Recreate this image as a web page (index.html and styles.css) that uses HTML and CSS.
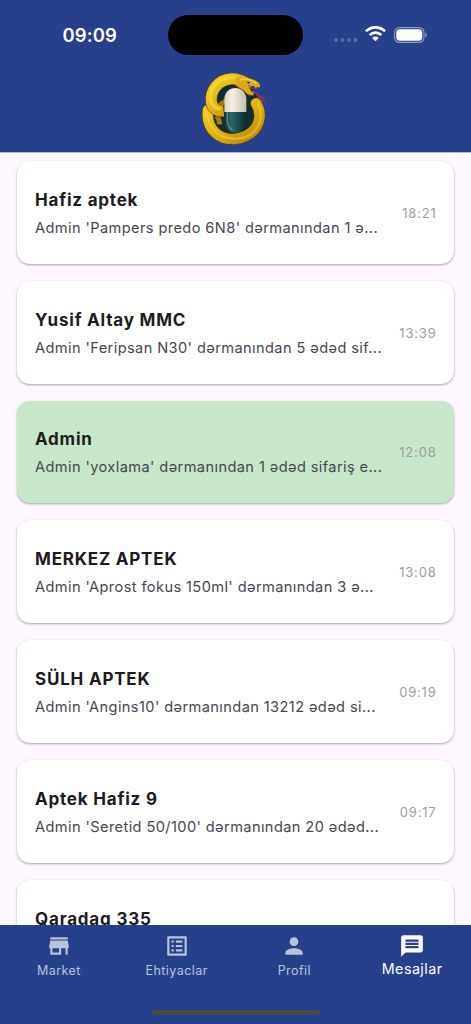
FILE: index.html
```html
<!DOCTYPE html>
<html lang="az">
<head>
  <meta charset="UTF-8" />
  <meta name="viewport" content="width=device-width, initial-scale=1.0" />
  <title>Mesajlar</title>
  <link rel="stylesheet" href="styles.css">
</head>
<body>
  <div class="app">
    <header class="header">
      <div class="status">
        <span class="clock">09:09</span>
        <span class="island"></span>
        <div class="signals">
          <svg class="dots" width="24" height="4" viewBox="0 0 24 4"><circle cx="2" cy="2" r="2"/><circle cx="8.5" cy="2" r="2"/><circle cx="15" cy="2" r="2"/><circle cx="21.5" cy="2" r="2"/></svg>
          <svg class="wifi" width="21" height="16" viewBox="0 0 21 16">
            <path d="M1 5.4a13.2 13.2 0 0 1 19 0M4.7 9.1a8.2 8.2 0 0 1 11.6 0" fill="none" stroke="#fff" stroke-width="2.7"/>
            <path d="M7.2 11.9a4.7 4.7 0 0 1 6.6 0L10.5 15.3z" fill="#fff"/>
          </svg>
          <svg class="battery" width="34" height="16" viewBox="0 0 34 16">
            <rect x=".6" y=".6" width="29.4" height="14.8" rx="4.8" fill="none" stroke="#8f9cc7" stroke-width="1.1"/>
            <rect x="2.3" y="2.3" width="26" height="11.4" rx="3.4" fill="#fff"/>
            <path d="M31.3 5.6c2 .6 2 4.2 0 4.8z" fill="#8f9cc7"/>
          </svg>
        </div>
      </div>
      <svg class="logo" width="90" height="95" viewBox="0 0 270 285">
        <defs>
          <linearGradient id="gold" x1="0" y1="0" x2="1" y2="1">
            <stop offset="0" stop-color="#f4cf25"/>
            <stop offset=".55" stop-color="#dcae0d"/>
            <stop offset="1" stop-color="#b98505"/>
          </linearGradient>
          <linearGradient id="cream" x1="0" x2="1">
            <stop offset="0" stop-color="#d5cfbd"/>
            <stop offset=".35" stop-color="#f5f1e6"/>
            <stop offset="1" stop-color="#c4bdaa"/>
          </linearGradient>
          <linearGradient id="teal" x1="0" x2="1">
            <stop offset="0" stop-color="#0b3a3d"/>
            <stop offset=".3" stop-color="#2a6969"/>
            <stop offset="1" stop-color="#052d31"/>
          </linearGradient>
        </defs>
        <ellipse cx="133" cy="149" rx="77" ry="83" fill="#122c31"/>
        <!-- lower coil -->
        <path d="M198 130C219 163 207 202 181 220C149 243 104 243 78 220C60 205 50 183 54 150" fill="none" stroke="#624709" stroke-width="34" stroke-linecap="round"/>
        <path d="M198 130C219 163 207 202 181 220C149 243 104 243 78 220C60 205 50 183 54 150" fill="none" stroke="url(#gold)" stroke-width="31" stroke-linecap="round"/>
        <path d="M203 128C222 163 210 207 180 225C146 243 98 239 73 212Q48 177 51 155" fill="none" stroke="#f5d64a" stroke-width="7" opacity=".5"/>
        <path d="M88 139Q101 120 123 119M80 167Q88 177 90 193" fill="none" stroke="#a77a06" stroke-width="15"/>
        <!-- upper coil -->
        <path d="M101 153C81 155 66 144 64 124C60 91 86 60 120 57C137 55 150 59 166 68" fill="none" stroke="#5b4209" stroke-width="36"/>
        <path d="M101 153C81 155 66 144 64 124C60 91 86 60 120 57C137 55 150 59 166 68" fill="none" stroke="url(#gold)" stroke-width="33"/>
        <path d="M92 147C75 146 62 133 61 112C61 83 86 55 121 52C137 49 151 56 164 63" fill="none" stroke="#f8dc43" stroke-width="11" opacity=".6"/>
        <!-- head -->
        <path d="M171 74L192 78L181 90L188 102L174 94L161 78z" fill="#8e2b20"/>
        <path d="M136 56C147 46 157 54 172 53Q190 56 206 68Q213 76 208 83L201 80L198 87L193 79L174 76L181 91L192 99L190 107L174 104L157 89L139 78z" fill="#d8ac18"/>
        <path d="M139 79L157 90L174 105L190 107" fill="none" stroke="#614509" stroke-width="3"/>
        <path d="M151 59Q174 52 199 70" fill="none" stroke="#f2d04b" stroke-width="5"/>
        <path d="M170 66l10-1-3 6z" fill="#171b17"/>
        <path d="M177 77l3 7 2-6M188 98l2-6 2 7" fill="#eee1bc"/>
        <path d="M187 96Q201 95 206 109Q211 120 226 127M207 109Q216 108 222 116" fill="none" stroke="#ad3549" stroke-width="4"/>
        <!-- capsule -->
        <path d="M103 156V117a33 33 0 0 1 66 0v39z" fill="url(#cream)"/>
        <path d="M103 156h66v29a33 33 0 0 1-66 0z" fill="url(#teal)"/>
        <path d="M112 119V181Q112 201 127 209" fill="none" stroke="#fff" stroke-width="4" opacity=".3"/>
      </svg>
    </header>

    <main class="list">
      <div class="card">
        <div class="info">
          <h2 class="name">Hafiz aptek</h2>
          <p class="text">Admin 'Pampers predo 6N8' dərmanından 1 ə...</p>
        </div>
        <span class="time">18:21</span>
      </div>
      <div class="card">
        <div class="info">
          <h2 class="name">Yusif Altay MMC</h2>
          <p class="text">Admin 'Feripsan N30' dərmanından 5 ədəd sif...</p>
        </div>
        <span class="time">13:39</span>
      </div>
      <div class="card unread">
        <div class="info">
          <h2 class="name">Admin</h2>
          <p class="text">Admin 'yoxlama' dərmanından 1 ədəd sifariş e...</p>
        </div>
        <span class="time">12:08</span>
      </div>
      <div class="card">
        <div class="info">
          <h2 class="name">MERKEZ APTEK</h2>
          <p class="text">Admin 'Aprost fokus 150ml' dərmanından 3 ə...</p>
        </div>
        <span class="time">13:08</span>
      </div>
      <div class="card">
        <div class="info">
          <h2 class="name">SÜLH APTEK</h2>
          <p class="text">Admin 'Angins10' dərmanından 13212 ədəd si...</p>
        </div>
        <span class="time">09:19</span>
      </div>
      <div class="card">
        <div class="info">
          <h2 class="name">Aptek Hafiz 9</h2>
          <p class="text">Admin 'Seretid 50/100' dərmanından 20 ədəd...</p>
        </div>
        <span class="time">09:17</span>
      </div>
      <div class="card">
        <div class="info">
          <h2 class="name">Qaradag 335</h2>
          <p class="text"></p>
        </div>
      </div>
    </main>

    <footer class="footer">
      <nav class="nav">
        <a class="tab">
          <svg viewBox="0 0 24 24"><path d="M20 4H4v2h16V4zm1 10v-2l-1-5H4l-1 5v2h1v6h10v-6h4v6h2v-6h1zm-9 4H6v-4h6v4z"/></svg>
          <span>Market</span>
        </a>
        <a class="tab">
          <svg viewBox="0 0 24 24"><path d="M19 5v14H5V5h14m1.1-2H3.9c-.5 0-.9.4-.9.9v16.2c0 .4.4.9.9.9h16.2c.4 0 .9-.5.9-.9V3.9c0-.5-.5-.9-.9-.9zM11 7h6v2h-6V7zm0 4h6v2h-6v-2zm0 4h6v2h-6zM7 7h2v2H7zm0 4h2v2H7zm0 4h2v2H7z"/></svg>
          <span>Ehtiyaclar</span>
        </a>
        <a class="tab">
          <svg viewBox="0 0 24 24"><path d="M12 12c2.21 0 4-1.79 4-4s-1.79-4-4-4-4 1.79-4 4 1.79 4 4 4zm0 2c-2.67 0-8 1.34-8 4v2h16v-2c0-2.66-5.33-4-8-4z"/></svg>
          <span>Profil</span>
        </a>
        <a class="tab active">
          <svg viewBox="0 0 24 24"><path d="M20 2H4c-1.1 0-2 .9-2 2v18l4-4h14c1.1 0 2-.9 2-2V4c0-1.1-.9-2-2-2zm-2 12H6v-2h12v2zm0-3H6V9h12v2zm0-3H6V6h12v2z"/></svg>
          <span>Mesajlar</span>
        </a>
      </nav>
      <div class="home-bar"></div>
    </footer>
  </div>
</body>
</html>
```
FILE: styles.css
```css
* {
  box-sizing: border-box;
}
body {
  margin: 0;
  font-family: Inter, "Noto Sans", sans-serif;
  background-color: #fef7ff;
  color: #1d1b20;
}
.app {
  height: 1024px;
  display: flex;
  flex-direction: column;
  overflow: hidden;
}
.header {
  flex: 0 0 152px;
  min-height: 0;
  background-color: #27408b;
  box-shadow: 0 1px 0 #b5b8da;
}
.status {
  height: 62px;
  padding-top: 15px;
  display: grid;
  grid-template-columns: 168px 135px 168px;
}
.clock {
  padding-left: 62.5px;
  font-size: 18.5px;
  font-weight: 600;
  line-height: 41px;
  letter-spacing: 0.1px;
  color: #fff;
}
.island {
  height: 40px;
  border-radius: 20px;
  background: #000;
}
.signals {
  display: flex;
  align-items: flex-start;
  padding: 11px 0 0 31px;
}
.dots {
  margin-top: 12px;
  fill: #5b6da7;
}
.wifi {
  margin: 0 0 0 7px;
}
.battery {
  margin-left: 8px;
  margin-top: 1px;
  flex-shrink: 0;
}
.logo {
  display: block;
  margin: -2px auto 0 190px;
}
.list {
  flex: 1;
  min-height: 0;
  overflow: hidden;
  padding: 9px 17px 0;
}
.card {
  display: flex;
  align-items: center;
  justify-content: space-between;
  height: 102.8px;
  margin-bottom: 17px;
  padding: 0 17.5px 0 18px;
  background: #fff;
  border-radius: 13px;
  box-shadow: 0 1px 3px rgba(0, 0, 0, 0.16), 0 1px 2px rgba(0, 0, 0, 0.2);
}
.unread {
  background: #c8e6c9;
}
.info {
  padding-top: 3px;
  white-space: nowrap;
}
.name {
  margin: 0;
  font-size: 17px;
  font-weight: 650;
  line-height: 26px;
  letter-spacing: 0.8px;
}
.text {
  margin: 2px 0 0;
  height: 26px;
  font-size: 14.6px;
  line-height: 26px;
  letter-spacing: 0.4px;
  color: #49454f;
}
.time {
  padding-top: 1px;
  font-size: 13px;
  letter-spacing: 0.8px;
  color: #9e9e9e;
}
.footer {
  flex: 0 0 99px;
  background: #27408b;
}
.nav {
  display: flex;
  height: 85px;
}
.tab {
  flex: 1;
  display: flex;
  flex-direction: column;
  align-items: center;
  padding-top: 8px;
  font-size: 12.5px;
  letter-spacing: 0.45px;
  color: #bac2dc;
}
.tab svg {
  width: 26px;
  height: 26px;
  fill: currentColor;
}
.tab span {
  margin-top: 2px;
  line-height: 20px;
}
.active {
  font-size: 14.3px;
  color: #fff;
}
.active span {
  margin-top: 0;
}
.home-bar {
  width: 168px;
  height: 5px;
  margin: 0 auto;
  border-radius: 3px;
  background: #4b4b4b;
}
```
